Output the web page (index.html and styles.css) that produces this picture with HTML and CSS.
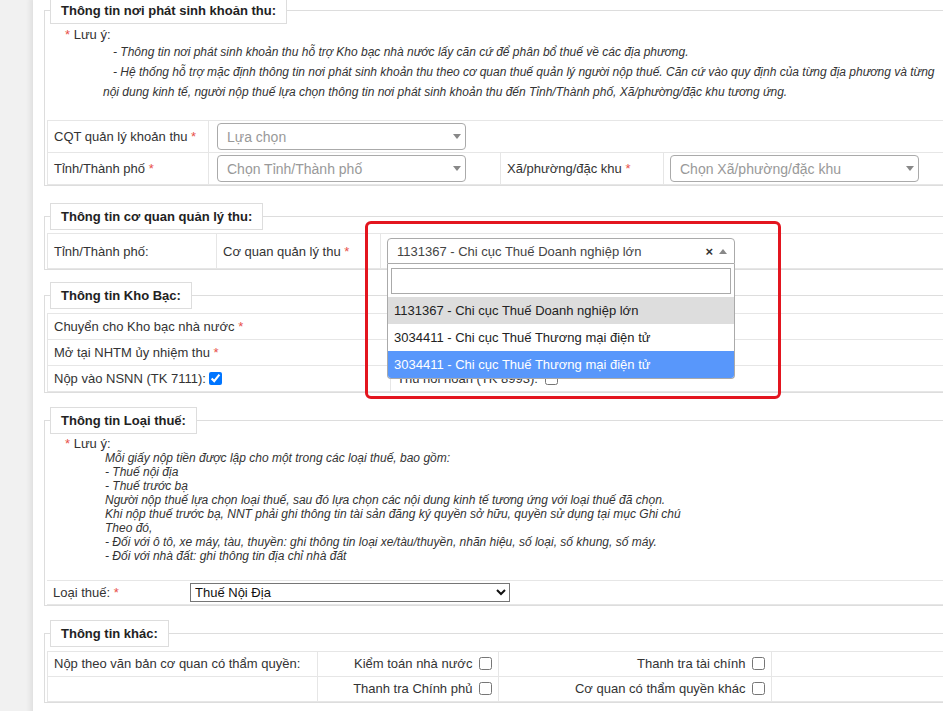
FILE: index.html
```html
<!DOCTYPE html>
<html lang="vi">

<head>
    <meta charset="UTF-8">
    <meta name="viewport" content="width=device-width, initial-scale=1.0">
    <title>Lập giấy nộp tiền</title>
    <link rel="stylesheet" href="styles.css">
</head>

<body>
    <div class="page">

        <fieldset class="box box-place">
            <legend>Thông tin nơi phát sinh khoản thu:</legend>
            <div class="note note-place">
                <div class="note-title"><span class="req">*</span> Lưu ý:</div>
                <p class="note-text">- Thông tin nơi phát sinh khoản thu hỗ trợ Kho bạc nhà nước lấy căn cứ để phân bổ thuế về các địa phương.</p>
                <p class="note-text">- Hệ thống hỗ trợ mặc định thông tin nơi phát sinh khoản thu theo cơ quan thuế quản lý người nộp thuế. Căn cứ vào quy định của từng địa phương và từng<br>nội dung kinh tế, người nộp thuế lựa chọn thông tin nơi phát sinh khoản thu đến Tỉnh/Thành phố, Xã/phường/đặc khu tương ứng.</p>
            </div>
            <table class="grid grid-select">
                <colgroup>
                    <col class="w161">
                    <col class="w292">
                    <col class="w163">
                    <col>
                </colgroup>
                <tr>
                    <td>CQT quản lý khoản thu <span class="req">*</span></td>
                    <td colspan="3" class="pad-wide">
                        <span class="s2">
                            <span class="s2-text is-placeholder">Lựa chọn</span>
                            <b class="s2-arrow"></b>
                        </span>
                    </td>
                </tr>
                <tr>
                    <td>Tỉnh/Thành phố <span class="req">*</span></td>
                    <td class="pad-wide">
                        <span class="s2">
                            <span class="s2-text is-placeholder">Chọn Tỉnh/Thành phố</span>
                            <b class="s2-arrow"></b>
                        </span>
                    </td>
                    <td>Xã/phường/đặc khu <span class="req">*</span></td>
                    <td>
                        <span class="s2">
                            <span class="s2-text is-placeholder">Chọn Xã/phường/đặc khu</span>
                            <b class="s2-arrow"></b>
                        </span>
                    </td>
                </tr>
            </table>
        </fieldset>

        <fieldset class="box box-agency">
            <legend>Thông tin cơ quan quản lý thu:</legend>
            <table class="grid grid-agency">
                <colgroup>
                    <col class="w169">
                    <col class="w164">
                    <col>
                </colgroup>
                <tr>
                    <td>Tỉnh/Thành phố:</td>
                    <td>Cơ quan quản lý thu <span class="req">*</span></td>
                    <td>
                        <div class="s2-wrap">
                            <span class="s2 s2-open">
                                <span class="s2-text">1131367 - Chi cục Thuế Doanh nghiệp lớn</span>
                                <span class="s2-clear">×</span>
                                <b class="s2-arrow is-up"></b>
                            </span>
                            <div class="s2-drop">
                                <div class="s2-search"><input type="text"></div>
                                <ul class="s2-results">
                                    <li class="is-selected">1131367 - Chi cục Thuế Doanh nghiệp lớn</li>
                                    <li>3034411 - Chi cục Thuế Thương mại điện tử</li>
                                    <li class="is-hover">3034411 - Chi cục Thuế Thương mại điện tử</li>
                                </ul>
                            </div>
                        </div>
                    </td>
                </tr>
            </table>
        </fieldset>

        <fieldset class="box box-bank">
            <legend>Thông tin Kho Bạc:</legend>
            <table class="grid grid-text">
                <colgroup>
                    <col class="w343">
                    <col>
                </colgroup>
                <tr>
                    <td>Chuyển cho Kho bạc nhà nước <span class="req">*</span></td>
                    <td></td>
                </tr>
                <tr>
                    <td>Mở tại NHTM ủy nhiệm thu <span class="req">*</span></td>
                    <td></td>
                </tr>
                <tr>
                    <td>Nộp vào NSNN (TK 7111):<input type="checkbox" class="chk" checked></td>
                    <td>Thu hồi hoàn (TK 8993): <input type="checkbox" class="chk"></td>
                </tr>
            </table>
        </fieldset>

        <fieldset class="box">
            <legend>Thông tin Loại thuế:</legend>
            <div class="note note-tax">
                <div class="note-title"><span class="req">*</span> Lưu ý:</div>
                <div class="note-list">
                    Mỗi giấy nộp tiền được lập cho một trong các loại thuế, bao gồm:<br>
                    - Thuế nội địa<br>
                    - Thuế trước bạ<br>
                    Người nộp thuế lựa chọn loại thuế, sau đó lựa chọn các nội dung kinh tế tương ứng với loại thuế đã chọn.<br>
                    Khi nộp thuế trước bạ, NNT phải ghi thông tin tài sản đăng ký quyền sở hữu, quyền sử dụng tại mục Ghi chú<br>
                    Theo đó,<br>
                    - Đối với ô tô, xe máy, tàu, thuyền: ghi thông tin loại xe/tàu/thuyền, nhãn hiệu, số loại, số khung, số máy.<br>
                    - Đối với nhà đất: ghi thông tin địa chỉ nhà đất
                </div>
            </div>
            <table class="grid grid-tax">
                <colgroup>
                    <col class="w137">
                    <col>
                </colgroup>
                <tr>
                    <td>Loại thuế: <span class="req">*</span></td>
                    <td>
                        <select class="tax-select">
                            <option>Thuế Nội Địa</option>
                            <option>Thuế Trước Bạ</option>
                        </select>
                    </td>
                </tr>
            </table>
        </fieldset>

        <fieldset class="box box-other">
            <legend>Thông tin khác:</legend>
            <table class="grid grid-text grid-other">
                <colgroup>
                    <col class="w270">
                    <col class="w181">
                    <col class="w273">
                    <col>
                </colgroup>
                <tr>
                    <td>Nộp theo văn bản cơ quan có thẩm quyền:</td>
                    <td class="right">Kiểm toán nhà nước <input type="checkbox" class="chk"></td>
                    <td class="right">Thanh tra tài chính <input type="checkbox" class="chk"></td>
                    <td></td>
                </tr>
                <tr>
                    <td></td>
                    <td class="right">Thanh tra Chính phủ <input type="checkbox" class="chk"></td>
                    <td class="right">Cơ quan có thẩm quyền khác <input type="checkbox" class="chk"></td>
                    <td></td>
                </tr>
            </table>
        </fieldset>

        <div class="mark"></div>
    </div>
</body>

</html>
```

FILE: styles.css
```css
html,
body {
    margin: 0;
    overflow: hidden;
}

body {
    font-family: 'Liberation Sans', Arial, sans-serif;
    font-size: 13px;
    color: #333;
    background-color: #f1f1f1;
}

.page {
    position: relative;
    margin-left: 33px;
    width: 960px;
    min-height: 720px;
    padding-left: 11px;
    background-color: #fff;
    box-shadow: -3px 0 5px rgba(0, 0, 0, 0.07);
}

/* fieldsets */

.box {
    border: 1px solid #ddd;
    margin: 0 0 14px;
    padding: 3px 2px 0;
    min-width: 0;
}

.box-place {
    margin-top: -3px;
    margin-bottom: 17px;
}

.box-agency {
    margin-bottom: 12px;
}

.box-bank,
.box-other {
    padding-top: 4px;
}

.box legend {
    margin-left: 3px;
    padding: 4px 10px;
    border: 1px solid #ddd;
    background-color: #fff;
    font-size: 13px;
    line-height: 17px;
    font-weight: bold;
    color: #222;
}

.req {
    color: #e8504a;
}

/* notes */

.note {
    padding-left: 18px;
}

.note-title {
    line-height: 15px;
}

.note-place {
    margin-bottom: 18px;
}

.note-text {
    margin: 0;
    padding-left: 38px;
    text-indent: 10px;
    font-size: 12px;
    font-style: italic;
    line-height: 20px;
    white-space: nowrap;
}

.note-tax {
    margin-bottom: 17px;
}

.note-tax .note-title {
    line-height: 14px;
}

.note-list {
    padding-left: 40px;
    font-size: 12px;
    font-style: italic;
    line-height: 14px;
    white-space: nowrap;
}

/* tables */

.grid {
    width: 100%;
    border-collapse: collapse;
    table-layout: fixed;
}

.grid td {
    border: 1px solid #e6e6e6;
    padding: 2px 6px;
    vertical-align: middle;
    white-space: nowrap;
}

.grid td.pad-wide {
    padding-left: 8px;
}

.grid-agency td {
    padding: 4px 6px;
}

.grid-text td {
    padding: 4px 6px;
    line-height: 17px;
}

.grid-other td {
    padding: 3px 6px;
    line-height: 18px;
}

.grid-tax td {
    padding: 2px 6px;
    border-left: none;
    border-right: none;
}

.grid td.right {
    text-align: right;
}

.w137 { width: 137px; }
.w161 { width: 161px; }
.w163 { width: 163px; }
.w164 { width: 164px; }
.w169 { width: 169px; }
.w181 { width: 181px; }
.w270 { width: 270px; }
.w273 { width: 273px; }
.w292 { width: 292px; }
.w343 { width: 343px; }

.chk {
    width: 13px;
    height: 13px;
    margin: 0 0 0 3px;
    vertical-align: -2px;
}

/* select2-like boxes */

.s2 {
    display: flex;
    align-items: center;
    box-sizing: border-box;
    width: 249px;
    height: 27px;
    padding: 0 4px 0 9px;
    border: 1px solid #aaa;
    border-radius: 4px;
    background-color: #fff;
    color: #444;
    font-size: 14px;
}

.s2-text {
    flex: 1;
    overflow: hidden;
    white-space: nowrap;
}

.s2-text.is-placeholder {
    color: #999;
}

.s2-arrow {
    width: 0;
    height: 0;
    border-style: solid;
    border-width: 5px 4px 0 4px;
    border-color: #888 transparent transparent transparent;
}

.s2-arrow.is-up {
    border-width: 0 4px 5px 4px;
    border-color: transparent transparent #888 transparent;
}

.s2-wrap {
    position: relative;
    width: 348px;
}

.s2-open {
    width: 348px;
    height: 26px;
    padding: 0 7px 0 9px;
    border-radius: 4px 4px 0 0;
    font-size: 13px;
}

.s2-clear {
    margin-right: 6px;
    font-size: 13px;
    font-weight: bold;
    color: #333;
}

.s2-drop {
    position: absolute;
    top: 100%;
    left: 0;
    right: 0;
    z-index: 5;
    box-sizing: border-box;
    border: 1px solid #aaa;
    border-top: none;
    border-radius: 0 0 4px 4px;
    background-color: #fff;
    overflow: hidden;
}

.s2-search {
    padding: 4px 3px 3px;
}

.s2-search input {
    display: block;
    box-sizing: border-box;
    width: 100%;
    height: 26px;
    margin: 0;
    border: 1px solid #aaa;
    border-radius: 0;
    outline: none;
}

.s2-results {
    list-style: none;
    margin: 0;
    padding: 0;
}

.s2-results li {
    height: 27px;
    line-height: 27px;
    padding-left: 6px;
    color: #222;
    font-size: 13px;
}

.s2-results li.is-selected {
    background-color: #ddd;
}

.s2-results li.is-hover {
    background-color: #5897fb;
    color: #fff;
}

/* native select */

.tax-select {
    width: 320px;
    height: 19px;
    font-family: 'Liberation Sans', Arial, sans-serif;
    font-size: 13px;
    color: #111;
    border: 1px solid #767676;
    border-radius: 0;
    background-color: #fff;
}

/* red highlight drawn over the open dropdown */

.mark {
    position: absolute;
    left: 332px;
    top: 224px;
    width: 416px;
    height: 178px;
    box-sizing: border-box;
    border: 3px solid #e3151f;
    border-radius: 6px;
    z-index: 6;
    pointer-events: none;
}
```
